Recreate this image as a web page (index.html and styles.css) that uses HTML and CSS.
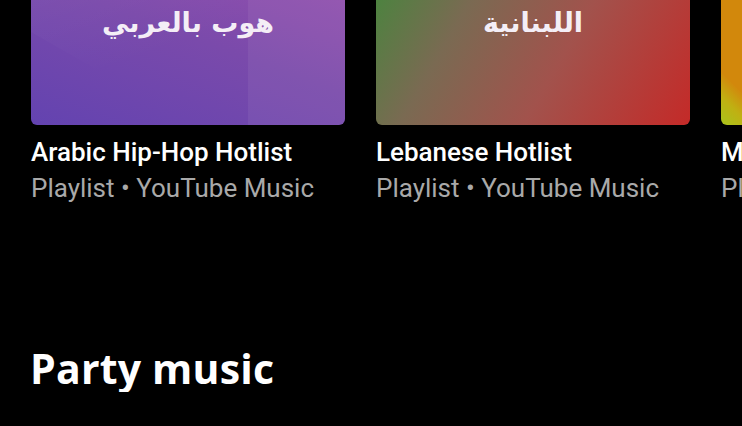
FILE: index.html
```html
<!DOCTYPE html>
<html lang="en">
<head>
    <meta charset="UTF-8">
    <meta name="viewport" content="width=device-width, initial-scale=1.0">
    <title>Home - YouTube Music</title>
    <link rel="stylesheet" href="styles.css">
</head>
<body>

    <div class="shelf">
        <div class="item">
            <div class="cover cover-hiphop">
                <div class="cover-fold"></div>
                <div class="cover-side"></div>
                <p class="cover-title" dir="rtl">هيب<br>هوب بالعربي</p>
            </div>
            <div class="item-title">Arabic Hip-Hop Hotlist</div>
            <div class="item-sub">Playlist • YouTube Music</div>
        </div>

        <div class="item">
            <div class="cover cover-lebanon">
                <p class="cover-title" dir="rtl">أفضل الأغاني<br>اللبنانية</p>
            </div>
            <div class="item-title">Lebanese Hotlist</div>
            <div class="item-sub">Playlist • YouTube Music</div>
        </div>

        <div class="item">
            <div class="cover cover-mix"></div>
            <div class="item-title">Mahraganat Hotlist</div>
            <div class="item-sub">Playlist • YouTube Music</div>
        </div>
    </div>

    <h2 class="shelf-title">Party music</h2>

</body>
</html>
```

FILE: styles.css
```css
body {
    margin: 0;
    background: #000;
    color: #fff;
    font-family: Roboto, "Noto Sans", Arial, sans-serif;
    overflow: hidden;
}
.shelf {
    display: flex;
    gap: 31px;
    padding-left: 31px;
    margin-top: -52px;
}
.item {
    flex: 0 0 314px;
    min-width: 0;
}
.cover {
    position: relative;
    height: 177px;
    border-radius: 6px;
    overflow: hidden;
}
.cover-hiphop {
    background: linear-gradient(20deg, #6343b0 0%, #7a4aab 50%, #9a50ae 100%);
}
.cover-fold {
    position: absolute;
    left: 0;
    top: 0;
    width: 217px;
    height: 140px;
    background: linear-gradient(160deg, rgba(255,255,255,0.05), rgba(255,255,255,0) 70%);
    clip-path: polygon(0 0, 100% 0, 100% 60%, 45% 100%, 0 60%);
}
.cover-side {
    position: absolute;
    right: 0;
    top: 0;
    bottom: 0;
    width: 97px;
    background: rgba(255,255,255,0.06);
}
.cover-lebanon {
    background: linear-gradient(120deg, #3f8a3a 0%, #7a6a52 30%, #a2524c 60%, #c42a28 100%);
}
.cover-mix {
    background:
        linear-gradient(45deg, #a8c41c 0%, #c0b012 6%, rgba(212,136,12,0) 11%),
        linear-gradient(60deg, rgba(212,136,12,0) 30%, #c8b414 34%, rgba(212,136,12,0) 40%),
        #d2880c;
}
.cover-title {
    position: relative;
    margin: 0;
    padding-top: 15px;
    text-align: center;
    font-family: "DejaVu Sans", sans-serif;
    font-weight: bold;
    font-size: 27px;
    line-height: 40px;
    color: #f4eef6;
}
.item-title {
    margin-top: 12px;
    font-size: 26px;
    font-weight: 500;
    line-height: 30px;
    white-space: nowrap;
}
.item-sub {
    margin-top: 6px;
    font-size: 26px;
    line-height: 30px;
    color: #a9a9a9;
    white-space: nowrap;
}
.shelf-title {
    margin: 141px 0 0 30px;
    font-family: "Open Sans", sans-serif;
    font-weight: 700;
    font-size: 41px;
    line-height: 48px;
    letter-spacing: 0.2px;
}
```
